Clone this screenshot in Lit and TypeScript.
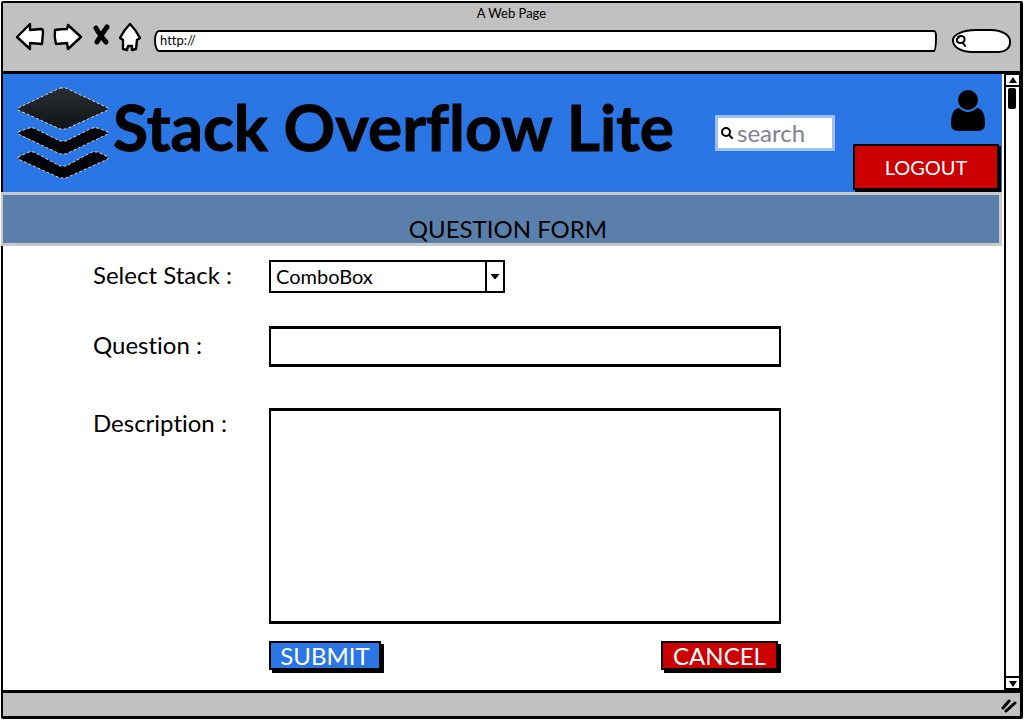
import { LitElement, html, css, svg } from "lit";
import { customElement } from "lit/decorators.js";

const svgBack = svg`<path d="M1 14L14 1V7L25 6Q27 6 27 9L26 21L14 20V26Z" />`;
const svgForward = svg`<path d="M2 7Q8 6 14 6L15 2L28 14L15 26L14 20L3 21Q1 14 2 7Z" />`;
const svgStop = svg`<path d="M6 5Q9 11 16 19M17 4Q11 12 7 19" stroke-width="5" fill="none" />`;
const svgHome = svg`<path d="M11 1Q17 7 21 15L18 17L17 26L13 27L13 23H9L8 27L4 26V17L1 15Q5 7 11 1Z" />`;

@customElement("app-root")
export class AppRoot extends LitElement {
  static styles = css`
    :host {
      display: block;
      font-family: Lato, "Noto Sans", sans-serif;
      font-variant-ligatures: none;
      color: #000;
      background: #fff;
    }
    * {
      box-sizing: border-box;
    }
    button,
    input,
    select,
    textarea {
      font: inherit;
      color: inherit;
      margin: 0;
      padding: 0;
      outline: none;
      border-radius: 0;
    }
    svg {
      display: block;
    }
    .window {
      display: flex;
      flex-direction: column;
      min-height: calc(100vh - 2px);
      margin: 1px;
      border: 2px solid #000;
      border-right-width: 3px;
      border-bottom-width: 3px;
      border-radius: 2px;
    }
    .chrome {
      height: 71px;
      background: #c1c1c1;
      border-bottom: 3px solid #000;
    }
    .chrome-title {
      margin: 0;
      text-align: center;
      font-size: 13px;
      font-weight: 400;
      line-height: 20px;
    }
    .nav {
      display: flex;
      align-items: center;
      gap: 9px;
      padding: 0 9px 0 13px;
    }
    .tool {
      border: 0;
      background: none;
      padding-bottom: 8px;
    }
    .tool svg {
      overflow: visible;
    }
    .address {
      flex: 1;
      min-width: 0;
      height: 22px;
      margin: 0 6px 0 4px;
      padding: 0 4px 2px;
      font-size: 13px;
      background: #fff;
      border: 2px solid #000;
      border-radius: 5px 3px 3px 5px / 10px 6px 14px 12px;
    }
    .find {
      display: flex;
      align-items: center;
      width: 59px;
      height: 24px;
      padding-left: 1px;
      background: #fff;
      border: 2px solid #000;
      border-radius: 24px 20px 12px 20px / 11px 12px 10px 12px;
    }
    .find input {
      width: 100%;
      min-width: 0;
      border: 0;
      background: none;
      font-size: 13px;
    }
    .find svg {
      flex: none;
    }
    .view {
      flex: 1;
      display: flex;
    }
    .page {
      flex: 1;
      min-width: 0;
    }
    .head {
      display: flex;
      height: 118px;
      background: #2a76e5;
    }
    .brand {
      display: flex;
      align-items: center;
      flex: 1;
      padding-left: 14px;
      white-space: nowrap;
    }
    .name {
      margin: 0;
      padding: 0 0 12px 4px;
      font-size: 64px;
      line-height: 72px;
      font-weight: 700;
      -webkit-text-stroke: 1px #000;
    }
    .search {
      align-self: center;
      display: flex;
      align-items: center;
      gap: 4px;
      width: 120px;
      height: 36px;
      margin-right: 18px;
      padding-left: 3px;
      background: #fff;
      border: 3px solid #9dc0f5;
    }
    .search svg {
      flex: none;
    }
    .search input {
      width: 100%;
      min-width: 0;
      border: 0;
      background: none;
      font-size: 24px;
      line-height: 28px;
      color: #000;
    }
    .search input::placeholder {
      color: #7f8291;
      opacity: 1;
    }
    .account {
      display: flex;
      flex-direction: column;
      align-items: flex-end;
      justify-content: flex-end;
      gap: 13px;
      padding: 0 3px 2px 0;
    }
    .user {
      border: 0;
      background: none;
      margin-right: 14px;
    }
    .btn {
      border: 2px solid #000;
      color: #fff;
      text-align: center;
      font-size: 24px;
      line-height: 24px;
      height: 29px;
      box-shadow: 3px 3px 0 #000;
    }
    .red {
      background: #cc0000;
    }
    .blue {
      background: #2a76e5;
    }
    .logout {
      width: 146px;
      height: 46px;
      font-size: 20px;
      box-shadow: 2px 2px 0 #000;
    }
    .banner {
      height: 54px;
      margin: 0 0 0 -2px;
      padding: 20px 0 0 14px;
      background: #5a7fab;
      border: 3px solid #c8c9cb;
      border-left-width: 2px;
      text-align: center;
      font-size: 24px;
      line-height: 28px;
      font-weight: 400;
    }
    .form {
      display: grid;
      grid-template-columns: 176px minmax(0, 512px);
      padding: 14px 24px 20px 90px;
      align-items: start;
    }
    .label {
      font-size: 24px;
      line-height: 30px;
    }
    .label.mid {
      padding-top: 4px;
    }
    .combo {
      display: grid;
      grid-template-columns: 1fr 18px;
      width: 236px;
      height: 33px;
      margin-bottom: 33px;
      border: 2px solid #000;
    }
    .combo select {
      grid-area: 1 / 1 / 2 / 3;
      appearance: none;
      border: 0;
      background: none;
      padding: 0 22px 2px 5px;
      font-size: 20px;
    }
    .arrow {
      grid-area: 1 / 2;
      border-left: 2px solid #000;
      pointer-events: none;
      display: grid;
      place-items: center;
    }
    .field {
      width: 100%;
      padding: 4px 8px;
      font-size: 20px;
      background: #fff;
      border: 3px solid #000;
      border-left-width: 2px;
      border-right-width: 2px;
      resize: none;
      display: block;
    }
    .line {
      height: 41px;
      margin-bottom: 41px;
    }
    .area {
      height: 216px;
      margin-bottom: 17px;
    }
    .actions {
      grid-column: 2;
      display: flex;
      justify-content: space-between;
      padding-right: 3px;
    }
    .submit {
      width: 112px;
    }
    .cancel {
      width: 117px;
    }
    .scroll {
      display: flex;
      flex-direction: column;
      width: 16px;
      margin-left: 2px;
      border: 2px solid #000;
      border-right-width: 1px;
      border-top-width: 1px;
      background: #fff;
    }
    .step {
      display: grid;
      place-items: center;
      height: 12px;
      border: 0;
      background: #fff;
      border-bottom: 2px solid #000;
    }
    .step.down {
      border-bottom: 0;
      border-top: 2px solid #000;
    }
    .track {
      flex: 1;
      padding: 1px 2px;
    }
    .thumb {
      width: 8px;
      height: 21px;
      background: #000;
      border-radius: 2px;
    }
    .status {
      display: flex;
      justify-content: flex-end;
      height: 26px;
      padding: 6px 3px 0;
      background: #c1c1c1;
      border-top: 3px solid #000;
    }
  `;

  render() {
    const tool = (label: string, width: number, shape: unknown) => html`
      <button class="tool" aria-label=${label}>
        <svg width=${width} height="28" viewBox="0 0 ${width} 28" fill="#fff" stroke="#000" stroke-width="2.4" stroke-linejoin="round" stroke-linecap="round">
          ${shape}
        </svg>
      </button>
    `;
    return html`
      <div class="window">
        <header class="chrome">
          <p class="chrome-title">A Web Page</p>
          <div class="nav">
            ${tool("Back", 28, svgBack)} ${tool("Forward", 28, svgForward)} ${tool("Stop", 20, svgStop)}
            ${tool("Home", 22, svgHome)}
            <input class="address" aria-label="Address" value="http://" />
            <label class="find">
              <svg width="12" height="14" viewBox="0 0 12 14" fill="none" stroke="#000" stroke-width="2" stroke-linecap="round">
                <path d="M3 3Q6 1 9 3Q11 8 6 9Q1 9 2 5L4 3M8 9L10 12" />
              </svg>
              <input aria-label="Web search" />
            </label>
          </div>
        </header>

        <div class="view">
          <main class="page">
            <div class="head">
              <div class="brand">
                <svg width="92" height="92" viewBox="0 0 92 92" stroke="#cfd6e2" stroke-width="1" stroke-dasharray="3 2">
                  <defs>
                    <linearGradient id="top" x1="0" y1="0" x2="0" y2="1">
                      <stop offset="0" stop-color="#2a2d31" />
                      <stop offset="1" stop-color="#111416" />
                    </linearGradient>
                  </defs>
                  <path fill="url(#top)" d="M43 1H49L91 21V23L49 42H43L1 23V21Z" />
                  <path fill="#04060b" d="M1 45L12 41H17L43 54H49L75 41H81L91 45V47L49 67H43L1 47Z" />
                  <path fill="#020207" d="M1 70L12 65H17L43 79H49L75 65H81L91 70V72L49 91H43L1 72Z" />
                </svg>
                <h1 class="name">Stack Overflow Lite</h1>
              </div>
              <label class="search">
                <svg width="12" height="12" viewBox="0 0 12 12" fill="none" stroke="#000" stroke-width="2" stroke-linecap="round">
                  <circle cx="5" cy="5" r="4" />
                  <path d="M8 8L11 11" />
                </svg>
                <input aria-label="Search" placeholder="search" />
              </label>
              <div class="account">
                <button class="user" aria-label="Profile">
                  <svg width="34" height="42" viewBox="0 0 34 42">
                    <circle cx="17" cy="11" r="10" />
                    <path d="M8 19Q17 27 26 19Q34 20 34 35Q34 42 27 42H7Q0 42 0 35Q0 20 8 19Z" />
                  </svg>
                </button>
                <button class="btn red logout">LOGOUT</button>
              </div>
            </div>
            <h2 class="banner">QUESTION FORM</h2>
            <form class="form" @submit=${(e: Event) => e.preventDefault()}>
              <label class="label" for="stack">Select Stack :</label>
              <div class="combo">
                <select id="stack">
                  <option>ComboBox</option>
                </select>
                <span class="arrow">
                  <svg width="10" height="6" viewBox="0 0 10 6"><path d="M1 0H9L5 5Z" stroke="#000" stroke-linejoin="round" /></svg>
                </span>
              </div>
              <label class="label mid" for="question">Question :</label>
              <input class="field line" id="question" />
              <label class="label" for="description">Description :</label>
              <textarea class="field area" id="description"></textarea>
              <div class="actions">
                <button class="btn blue submit">SUBMIT</button>
                <button class="btn red cancel" type="button">CANCEL</button>
              </div>
            </form>
          </main>
          <aside class="scroll" aria-label="Scroll bar">
            <button class="step" aria-label="Scroll up">
              <svg width="8" height="7" viewBox="0 0 8 7"><path d="M4 0L8 6H0Z" /></svg>
            </button>
            <div class="track"><div class="thumb"></div></div>
            <button class="step down" aria-label="Scroll down">
              <svg width="8" height="7" viewBox="0 0 8 7"><path d="M0 1H8L4 7Z" /></svg>
            </button>
          </aside>
        </div>
        <footer class="status">
          <svg width="16" height="14" viewBox="0 0 16 14" fill="none" stroke="#000" stroke-width="3" stroke-linecap="round">
            <path d="M2 9L8 2M5 12L14 4" />
          </svg>
        </footer>
      </div>
    `;
  }
}
